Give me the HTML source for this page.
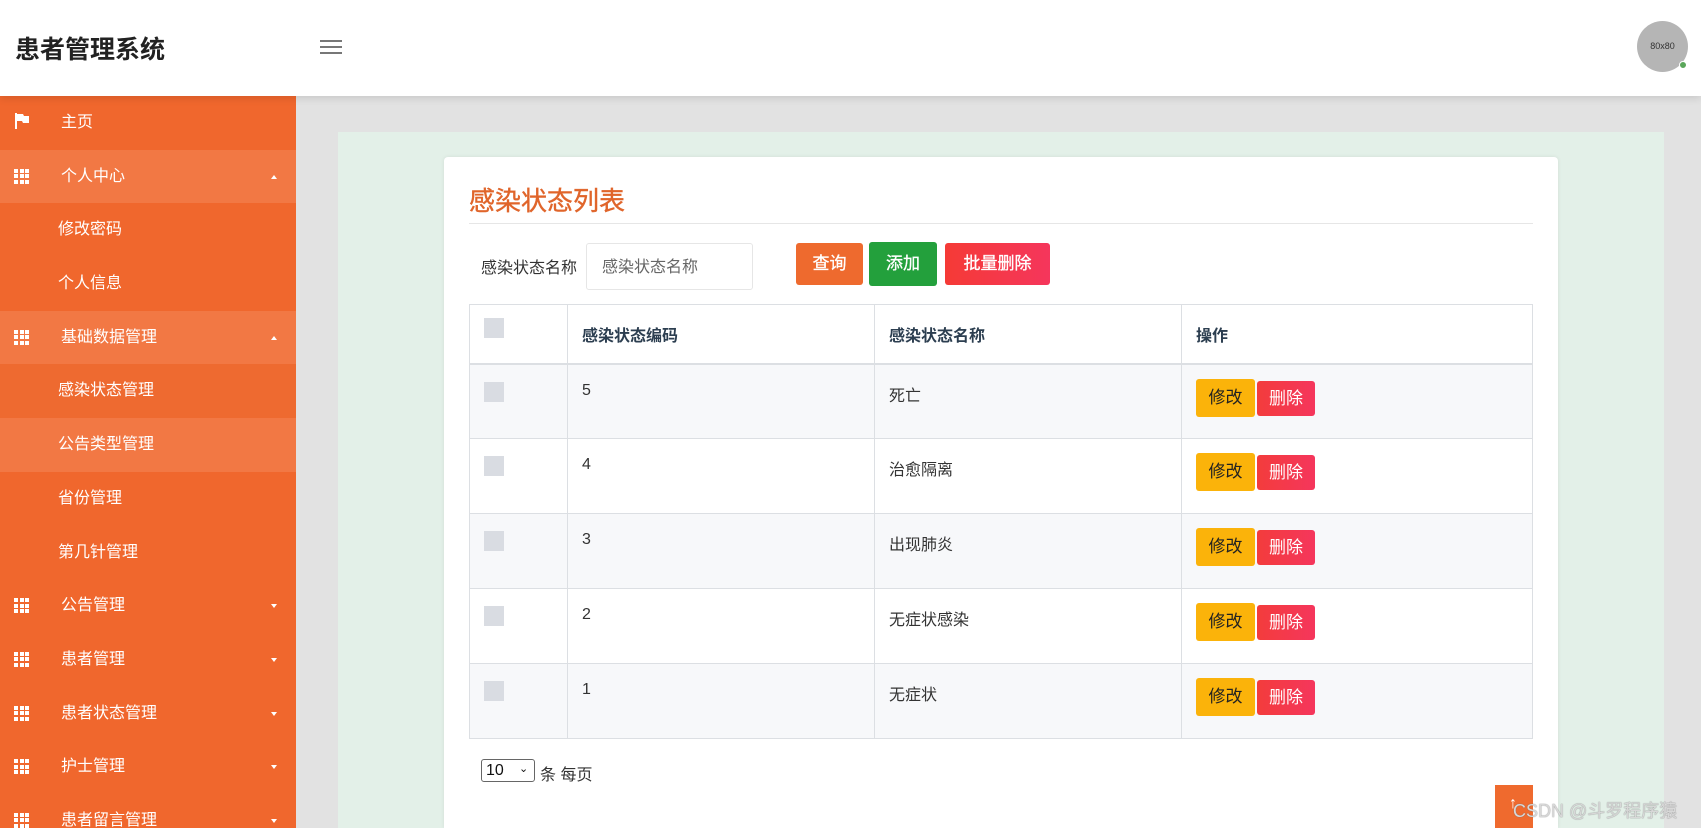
<!DOCTYPE html>
<html><head><meta charset="utf-8"><style>
*{margin:0;padding:0;box-sizing:border-box}
html,body{width:1701px;height:828px;overflow:hidden}
body{position:relative;background:#e2e2e2;font-family:"Liberation Sans","Noto Sans CJK SC",sans-serif}
.a{position:absolute}
#hdr{left:0;top:0;width:1701px;height:96px;background:#fff;box-shadow:0 2px 8px rgba(0,0,0,.12);z-index:2}
#side{left:0;top:96px;width:296px;height:732px;background:#f0672d;overflow:hidden}
.mi{position:relative;height:53.7px;color:#fff;font-size:16px;line-height:53.7px}
.mi.l{background:#f27844}
.mi .t{position:absolute;left:61px}
.mi.s .t{left:58px}
.mi .car{position:absolute;left:271px;top:25px;width:0;height:0;border-left:3.5px solid transparent;border-right:3.5px solid transparent}
.up{border-bottom:4px solid #fff}
.dn{border-top:4px solid #fff}
.g{position:absolute;left:14px;top:19px;width:15px;height:15px}
.g i{position:absolute;width:4px;height:4px;background:#fff}
#green{left:338px;top:132px;width:1326px;height:696px;background:#e3f0e8}
#card{left:444px;top:157px;width:1114px;height:671px;background:#fff;border-radius:4px 4px 0 0;box-shadow:0 0 4px rgba(0,0,0,.08)}
.btn{position:absolute;color:#fff;font-size:17px;text-align:center;border-radius:3px;-webkit-text-stroke:.3px #fff}
table{position:absolute;left:469px;top:304px;width:1064px;border-collapse:collapse;font-size:16px;color:#333}
td,th{border:1px solid #dcdfe3;text-align:left;vertical-align:top}
th{height:59px;vertical-align:middle;font-weight:bold;color:#2c3e50;border-bottom:2px solid #dcdfe3}
td{height:75px;padding-top:17px}
tr.z td{background:#f7f8fa}
.cb{display:inline-block;width:20px;height:20px;background:#d9dce2;margin-left:14px}
th .cb{margin-top:-8px}
.ed{display:inline-block;width:59px;height:38px;line-height:38px;text-align:center;background:#fbb30a;color:#222;font-size:17px;border-radius:3px;margin-left:14px;margin-top:-3px;vertical-align:top}
.de{display:inline-block;width:58px;height:35px;line-height:35px;text-align:center;background:linear-gradient(90deg,#f33c3c,#f5365c);color:#fff;font-size:17px;border-radius:3px;margin-left:2px;margin-top:-1px;vertical-align:top}
</style></head><body>
<div id="hdr" class="a">
<div class="a" style="left:15px;top:30px;font-size:25px;font-weight:bold;color:#222">患者管理系统</div>
<div class="a" style="left:320px;top:40px;width:22px;height:2px;background:#777"></div>
<div class="a" style="left:320px;top:46px;width:22px;height:2px;background:#777"></div>
<div class="a" style="left:320px;top:52px;width:22px;height:2px;background:#777"></div>
<div class="a" style="left:1637px;top:21px;width:51px;height:51px;border-radius:50%;background:#b5b5b5;font-size:9px;line-height:51px;text-align:center;color:#333">80x80</div>
<div class="a" style="left:1679px;top:61px;width:8px;height:8px;border-radius:50%;background:#5aa65a;border:1px solid #fff"></div>
</div>
<div id="side" class="a">
<div class="mi"><svg class="a" style="left:14px;top:17px" width="16" height="16" viewBox="0 0 16 16"><path d="M1 0h2v16H1zM3 1h6l1 2h5v7H9l-1-2H3z" fill="#fff"/></svg><span class="t">主页</span></div>
<div class="mi l"><div class="g"><i style="left:0;top:0"></i><i style="left:5.5px;top:0"></i><i style="left:11px;top:0"></i><i style="left:0;top:5.5px"></i><i style="left:5.5px;top:5.5px"></i><i style="left:11px;top:5.5px"></i><i style="left:0;top:11px"></i><i style="left:5.5px;top:11px"></i><i style="left:11px;top:11px"></i></div><span class="t">个人中心</span><span class="car up"></span></div>
<div class="mi s"><span class="t">修改密码</span></div>
<div class="mi s"><span class="t">个人信息</span></div>
<div class="mi l"><div class="g"><i style="left:0;top:0"></i><i style="left:5.5px;top:0"></i><i style="left:11px;top:0"></i><i style="left:0;top:5.5px"></i><i style="left:5.5px;top:5.5px"></i><i style="left:11px;top:5.5px"></i><i style="left:0;top:11px"></i><i style="left:5.5px;top:11px"></i><i style="left:11px;top:11px"></i></div><span class="t">基础数据管理</span><span class="car up"></span></div>
<div class="mi s" style="background:#ee6a30"><span class="t">感染状态管理</span></div>
<div class="mi s l"><span class="t">公告类型管理</span></div>
<div class="mi s"><span class="t">省份管理</span></div>
<div class="mi s"><span class="t">第几针管理</span></div>
<div class="mi"><div class="g"><i style="left:0;top:0"></i><i style="left:5.5px;top:0"></i><i style="left:11px;top:0"></i><i style="left:0;top:5.5px"></i><i style="left:5.5px;top:5.5px"></i><i style="left:11px;top:5.5px"></i><i style="left:0;top:11px"></i><i style="left:5.5px;top:11px"></i><i style="left:11px;top:11px"></i></div><span class="t">公告管理</span><span class="car dn"></span></div>
<div class="mi"><div class="g"><i style="left:0;top:0"></i><i style="left:5.5px;top:0"></i><i style="left:11px;top:0"></i><i style="left:0;top:5.5px"></i><i style="left:5.5px;top:5.5px"></i><i style="left:11px;top:5.5px"></i><i style="left:0;top:11px"></i><i style="left:5.5px;top:11px"></i><i style="left:11px;top:11px"></i></div><span class="t">患者管理</span><span class="car dn"></span></div>
<div class="mi"><div class="g"><i style="left:0;top:0"></i><i style="left:5.5px;top:0"></i><i style="left:11px;top:0"></i><i style="left:0;top:5.5px"></i><i style="left:5.5px;top:5.5px"></i><i style="left:11px;top:5.5px"></i><i style="left:0;top:11px"></i><i style="left:5.5px;top:11px"></i><i style="left:11px;top:11px"></i></div><span class="t">患者状态管理</span><span class="car dn"></span></div>
<div class="mi"><div class="g"><i style="left:0;top:0"></i><i style="left:5.5px;top:0"></i><i style="left:11px;top:0"></i><i style="left:0;top:5.5px"></i><i style="left:5.5px;top:5.5px"></i><i style="left:11px;top:5.5px"></i><i style="left:0;top:11px"></i><i style="left:5.5px;top:11px"></i><i style="left:11px;top:11px"></i></div><span class="t">护士管理</span><span class="car dn"></span></div>
<div class="mi"><div class="g"><i style="left:0;top:0"></i><i style="left:5.5px;top:0"></i><i style="left:11px;top:0"></i><i style="left:0;top:5.5px"></i><i style="left:5.5px;top:5.5px"></i><i style="left:11px;top:5.5px"></i><i style="left:0;top:11px"></i><i style="left:5.5px;top:11px"></i><i style="left:11px;top:11px"></i></div><span class="t">患者留言管理</span><span class="car dn"></span></div>
</div>
<div id="green" class="a"></div>
<div id="card" class="a"></div>
<div class="a" style="left:469px;top:181px;font-size:26px;color:#e0652b;-webkit-text-stroke:.4px #e0652b">感染状态列表</div>
<div class="a" style="left:469px;top:223px;width:1064px;height:1px;background:#e6e6e6"></div>
<div class="a" style="left:481px;top:254px;font-size:16px;color:#333">感染状态名称</div>
<div class="a" style="left:586px;top:243px;width:167px;height:47px;border:1px solid #e6e6e6;border-radius:3px;font-size:16px;color:#666;line-height:47px;padding-left:15px">感染状态名称</div>
<div class="btn" style="left:796px;top:243px;width:67px;height:42px;line-height:42px;background:#ee6a2e">查询</div>
<div class="btn" style="left:869px;top:242px;width:68px;height:44px;line-height:44px;background:#23a03c">添加</div>
<div class="btn" style="left:945px;top:243px;width:105px;height:42px;line-height:42px;background:linear-gradient(90deg,#f53a36,#f5365c)">批量删除</div>
<table>
<tr><th style="width:98px"><span class="cb"></span></th><th style="width:307px;padding-left:14px">感染状态编码</th><th style="width:307px;padding-left:14px">感染状态名称</th><th style="padding-left:14px">操作</th></tr>
<tr class="z"><td><span class="cb"></span></td><td style="padding-left:14px">5</td><td style="padding-left:14px">死亡</td><td><span class="ed">修改</span><span class="de">删除</span></td></tr>
<tr><td><span class="cb"></span></td><td style="padding-left:14px">4</td><td style="padding-left:14px">治愈隔离</td><td><span class="ed">修改</span><span class="de">删除</span></td></tr>
<tr class="z"><td><span class="cb"></span></td><td style="padding-left:14px">3</td><td style="padding-left:14px">出现肺炎</td><td><span class="ed">修改</span><span class="de">删除</span></td></tr>
<tr><td><span class="cb"></span></td><td style="padding-left:14px">2</td><td style="padding-left:14px">无症状感染</td><td><span class="ed">修改</span><span class="de">删除</span></td></tr>
<tr class="z"><td><span class="cb"></span></td><td style="padding-left:14px">1</td><td style="padding-left:14px">无症状</td><td><span class="ed">修改</span><span class="de">删除</span></td></tr>
</table>
<div class="a" style="left:481px;top:759px;width:54px;height:23px;border:1px solid #666;border-radius:3px;font-size:16px;line-height:21px;padding-left:4px;color:#111">10<span style="position:absolute;left:37px;top:-1px;font-size:11px">⌄</span></div>
<div class="a" style="left:540px;top:761px;font-size:16px;color:#333">条 每页</div>
<div class="a" style="left:1495px;top:785px;width:38px;height:43px;background:#ef6a2e;color:#fff;font-size:16px;padding:10px 0 0 14px">↑</div>
<div class="a" style="left:1513px;top:797px;font-size:18px;color:#d8d8d8;text-shadow:0 0 1px #666">CSDN @斗罗程序猿</div>
</body></html>
